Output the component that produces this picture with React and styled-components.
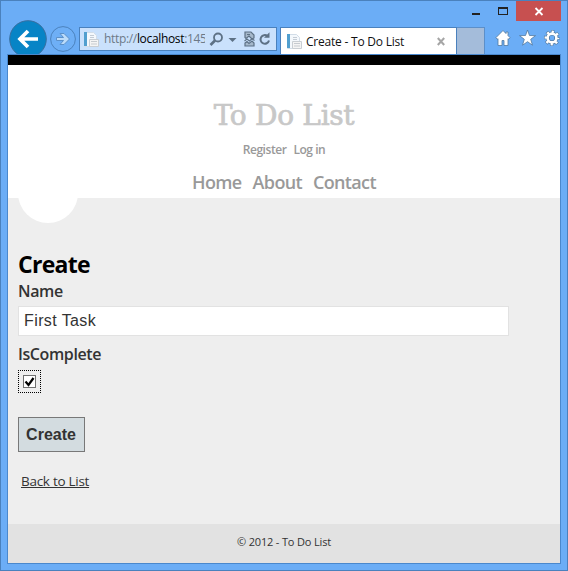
import React from 'react';
import styled, { createGlobalStyle } from 'styled-components';

const GlobalStyle = createGlobalStyle`
  * { box-sizing: border-box; }
  body { margin: 0; overflow: hidden; }
`;

const ui = `"Open Sans", "Noto Sans", sans-serif`;

const BrowserWindow = styled.div`
  width: 568px;
  height: 571px;
  display: flex;
  flex-direction: column;
  background: #6badf6;
  border: 1px solid #4a81bd;
  padding: 0 6px 6px;
  font-family: ${ui};
`;

const TitleBar = styled.div`
  height: 20px;
  flex: none;
  display: flex;
  justify-content: flex-end;
`;

const WindowButton = styled.button`
  width: ${(p) => p.$width}px;
  height: 20px;
  padding: 0;
  border: 0;
  display: flex;
  background: ${(p) => p.$color || 'transparent'};
`;

const ToolBar = styled.div`
  height: 33px;
  flex: none;
  display: flex;
  align-items: flex-end;
`;

const NavButton = styled.button`
  width: ${(p) => p.$width}px;
  height: 34px;
  flex: none;
  margin: 0 ${(p) => p.$gap}px 0 0;
  padding: 0;
  border: 0;
  background: none;
  display: flex;
`;

const AddressBar = styled.div`
  width: 198px;
  height: 24px;
  flex: none;
  margin: 0 3px 3px 0;
  display: flex;
  align-items: center;
  background: #cae1fc;
  border: 1px solid #4a81bd;
  padding-left: 3px;
`;

const Url = styled.div`
  width: 101px;
  margin-left: 5px;
  overflow: hidden;
  white-space: nowrap;
  font-size: 12px;
  line-height: 22px;
  letter-spacing: -0.33px;
  color: #6d7a88;
`;

const Host = styled.span`
  color: #000;
`;

const AddressIcons = styled.svg`
  flex: none;
  margin-left: 4px;
`;

const Tab = styled.div`
  width: 177px;
  height: 27px;
  flex: none;
  display: flex;
  align-items: center;
  background: #fff;
  border: 1px solid #4a81bd;
  border-bottom: 0;
  padding: 0 11px 0 5px;
`;

const TabTitle = styled.div`
  flex: 1;
  margin: 1px 0 0 4px;
  white-space: nowrap;
  font-size: 12px;
  line-height: 20px;
  letter-spacing: -0.22px;
  color: #111;
`;

const NewTab = styled.div`
  width: 28px;
  height: 27px;
  flex: none;
  background: #a4bcda;
  border: 1px solid #5c8fc9;
  border-width: 1px 1px 0 0;
`;

const Tools = styled.div`
  display: flex;
  align-items: center;
  gap: 8px;
  height: 33px;
  margin-left: 10px;
`;

const Viewport = styled.div`
  flex: 1;
  display: flex;
  flex-direction: column;
  border: 1px solid #4a88cd;
  background: #eee;
`;

const Header = styled.header`
  height: 143px;
  flex: none;
  display: flex;
  flex-direction: column;
  align-items: center;
  background: #fff;
  border-top: 10px solid #000;
`;

const SiteTitle = styled.h1`
  margin: 32px 0 0;
  font: 400 28px/38px "DejaVu Serif", serif;
  letter-spacing: -0.3px;
  -webkit-text-stroke: 0.7px #c8c8c8;
  white-space: nowrap;
  color: #c8c8c8;
`;

const LinkRow = styled.nav`
  display: flex;
  gap: ${(p) => p.$gap}px;
  margin-top: ${(p) => p.$top}px;
  font-size: ${(p) => p.$size}px;
  line-height: 24px;
  font-weight: 600;
  letter-spacing: ${(p) => p.$spacing}px;
  white-space: nowrap;
`;

const NavLink = styled.a`
  color: #999;
`;

const Main = styled.main`
  flex: 1;
  padding: 0 10px;
`;

const HalfDisc = styled.div`
  width: 60px;
  height: 25px;
  overflow: hidden;
  display: flex;
  align-items: flex-end;

  &::before {
    content: '';
    flex: none;
    width: 60px;
    height: 60px;
    border-radius: 50%;
    background: #fff;
  }
`;

const Heading = styled.h2`
  margin: 25px 0 0;
  font-size: 23px;
  line-height: 32px;
  font-weight: 700;
  letter-spacing: -0.7px;
  color: #000;
`;

const Label = styled.label`
  display: block;
  margin-top: ${(p) => p.$top}px;
  font-size: 16px;
  line-height: 22px;
  font-weight: 600;
  letter-spacing: ${(p) => p.$spacing}px;
  color: #333;
`;

const TextInput = styled.input`
  display: block;
  width: 491px;
  height: 30px;
  margin-top: 4px;
  padding: 0 5px 1px;
  border: 1px solid #e2e2e2;
  border-radius: 0;
  outline: 0;
  background: #fff;
  color: #333;
  font: 16px "Liberation Sans", sans-serif;
  letter-spacing: 0.4px;
`;

const CheckFocus = styled.div`
  width: 23px;
  height: 23px;
  margin-top: 5px;
  display: grid;
  place-items: center;
`;

const SubmitButton = styled.button`
  display: block;
  width: 67px;
  height: 35px;
  margin-top: 24px;
  padding: 0 1px 0 0;
  border: 1px solid #787878;
  background: #d3dce0;
  color: #333;
  font: 700 16px "Liberation Sans", sans-serif;
`;

const BackLink = styled.a`
  display: block;
  width: max-content;
  margin: 19px 0 0 3px;
  font-size: 13.5px;
  line-height: 20px;
  letter-spacing: -0.28px;
  color: #333;
  text-decoration: underline;
`;

const Footer = styled.footer`
  height: 39px;
  flex: none;
  background: #e2e2e2;
  text-align: center;
  font-size: 11px;
  line-height: 36px;
  letter-spacing: -0.16px;
  color: #333;
`;

const PageIcon = () => (
  <svg width="16" height="17" viewBox="0 0 16 17">
    <path d="M1.5 1.5h9l3 3v11h-12z" fill="#f4f8fc" stroke="#d2dde8" />
    <path d="M1 1h3v14H1z" fill="#519fcf" />
    <path d="M7 4.5h4M7 6.5h4" stroke="#c4ccd5" />
    <path d="M6.5 8.5h9v7h-9z" fill="#f4f4f4" stroke="#c9ced3" />
    <path d="M8 10.5h6M8 13h6" stroke="#c6cbd0" />
  </svg>
);

export default function App() {
  return (
    <>
      <GlobalStyle />
      <BrowserWindow>
        <TitleBar>
          <WindowButton $width={26} aria-label="Minimize">
            <svg width="26" height="20"><path d="M8 12h8v2H8z" fill="#222" /></svg>
          </WindowButton>
          <WindowButton $width={26} aria-label="Maximize">
            <svg width="26" height="20"><path d="M8 6h10v8H8zM9 8v5h8V8z" fill="#222" fillRule="evenodd" /></svg>
          </WindowButton>
          <WindowButton $width={45} $color="#c75050" aria-label="Close">
            <svg width="45" height="20"><path d="M19.5 7l7 7m0-7l-7 7" stroke="#fff" strokeWidth="1.8" /></svg>
          </WindowButton>
        </TitleBar>
        <ToolBar>
          <NavButton $width={40} $gap={3} aria-label="Back">
            <svg width="40" height="34">
              <circle cx="21" cy="19" r="18.3" fill="#0784c6" stroke="#386e9f" />
              <path d="M31 19H14M21 11l-8 8 8 8" fill="none" stroke="#fff" strokeWidth="3.7" />
            </svg>
          </NavButton>
          <NavButton $width={26} $gap={3} aria-label="Forward">
            <svg width="26" height="34">
              <circle cx="13" cy="19" r="12.4" fill="#6eaff6" stroke="#4b82bd" />
              <path d="M6.5 17.5h7l-3.5-4h4l5.5 5.5-5.5 5.5h-4l3.5-4h-7z" fill="#bcdcfa" stroke="#5c91ca" />
            </svg>
          </NavButton>
          <AddressBar>
            <PageIcon />
            <Url>http://<Host>localhost</Host>:145</Url>
            <AddressIcons width="64" height="20" fill="none" stroke="#5d7185">
              <circle cx="9" cy="8.5" r="4" strokeWidth="1.8" />
              <path d="M6 11.5L1.5 16" strokeWidth="2.6" />
              <path d="M19.5 9h8l-4 4z" fill="#5d7185" stroke="none" />
              <path d="M36 3h6l3 3v3l-2 1-3-3-3 2.5-1-1zM36 17v-3l2-1.5 2 2 3-2.5 2 2V17z" fill="#a5b8cb" strokeWidth="1.2" />
              <path d="M35.5 12l2.5-2 2.5 2 2.5-2.2 2.5 1.7M38 5.5h3" strokeWidth="1.1" />
              <path d="M58.5 7A4.3 4.3 0 1 0 60 11.5" strokeWidth="2" />
              <path d="M55 8.8h5.5V3.2z" fill="#5d7185" stroke="none" />
            </AddressIcons>
          </AddressBar>
          <Tab>
            <PageIcon />
            <TabTitle>Create - To Do List</TabTitle>
            <svg width="8" height="9"><path d="M.8 1l6.4 7M7.2 1L.8 8" stroke="#a6a6a6" strokeWidth="2" /></svg>
          </Tab>
          <NewTab />
          <Tools>
            <svg width="16" height="18" viewBox="0 0 16 18">
              <path d="M8 1.5L.8 8.8l1.5 1.4.7-.6v6.9h4v-5h2v5h4V9.6l.7.6 1.5-1.4-2.2-2.2V3h-2v1.6z" fill="#fff" stroke="#51789f" strokeWidth=".8" />
            </svg>
            <svg width="17" height="18" viewBox="0 0 17 18">
              <path d="M8.5 1l2 5.5 6 .1-4.8 3.7 1.8 5.9-5-3.5-5 3.5 1.8-5.9L.5 6.6l6-.1z" fill="#fff" stroke="#51789f" strokeWidth=".8" />
            </svg>
            <svg width="16" height="18" viewBox="0 0 16 18" fill="none">
              <g stroke="#51789f">
                <circle cx="8" cy="9" r="4.4" strokeWidth="4" />
                <circle cx="8" cy="9" r="6.3" strokeWidth="3.4" strokeDasharray="3 1.948" strokeDashoffset="1.5" />
              </g>
              <g stroke="#fff">
                <circle cx="8" cy="9" r="4.4" strokeWidth="2.6" />
                <circle cx="8" cy="9" r="6.2" strokeWidth="2.4" strokeDasharray="2.2 2.67" strokeDashoffset="1.1" />
              </g>
            </svg>
          </Tools>
        </ToolBar>
        <Viewport>
          <Header>
            <SiteTitle>To Do List</SiteTitle>
            <LinkRow $gap={7} $top={3} $size={12} $spacing={-0.45}>
              <NavLink>Register</NavLink>
              <NavLink>Log in</NavLink>
            </LinkRow>
            <LinkRow $gap={11} $top={8} $size={18} $spacing={-0.65}>
              <NavLink>Home</NavLink>
              <NavLink>About</NavLink>
              <NavLink>Contact</NavLink>
            </LinkRow>
          </Header>
          <Main>
            <HalfDisc />
            <Heading>Create</Heading>
            <Label $top={0} $spacing={-0.4}>Name</Label>
            <TextInput defaultValue="First Task" />
            <Label $top={7} $spacing={-0.4}>IsComplete</Label>
            <CheckFocus role="checkbox" aria-checked="true">
              <svg width="23" height="23">
                <path d="M0 .5h23M0 22.5h23M.5 0v23M22.5 0v23" stroke="#000" strokeDasharray="1 1" />
                <rect x="5.5" y="5.5" width="12" height="12" fill="#fff" stroke="#707070" />
                <path d="M7.5 11.5l3 3.5 5-7" fill="none" stroke="#000" strokeWidth="2.2" />
              </svg>
            </CheckFocus>
            <SubmitButton>Create</SubmitButton>
            <BackLink>Back to List</BackLink>
          </Main>
          <Footer>© 2012 - To Do List</Footer>
        </Viewport>
      </BrowserWindow>
    </>
  );
}
